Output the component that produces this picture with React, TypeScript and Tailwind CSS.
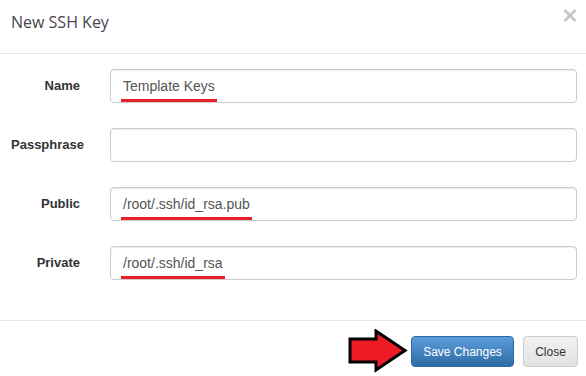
import React from "react";

function Field({ label, value, underline }: { label: string; value?: string; underline?: boolean }) {
  return (
    <div className="flex items-center">
      <div className="ml-[11px] w-[69px] shrink-0 text-right whitespace-nowrap text-[13px] font-bold text-[#333] font-['Liberation_Sans',Arial,sans-serif]">
        {label}
      </div>
      <div className="ml-[30px] mr-[9px] flex h-[34px] flex-1 items-center rounded-[4px] border border-[#ccc] bg-white pl-[12px] shadow-[inset_0_1px_1px_rgba(0,0,0,0.075)]">
        {value && (
          <span className="relative text-[14px] text-[#555] font-['Liberation_Sans',Arial,sans-serif]">
            {value}
            {underline && (
              <span className="absolute -left-[2px] -right-[2px] bottom-[-5px] h-[3px] bg-[#e8202a]" />
            )}
          </span>
        )}
      </div>
    </div>
  );
}

export default function App() {
  return (
    <div className="h-[376px] w-[586px] overflow-hidden bg-white">
      <div className="relative h-[54px] border-b border-[#e5e5e5]">
        <div className="pl-[11px] pt-[10px] text-[16px] leading-[24px] text-[#4a4450] font-['Open_Sans',sans-serif]">
          New SSH Key
        </div>
        <svg className="absolute left-[563px] top-[9px]" width="14" height="13" viewBox="0 0 14 13">
          <path d="M1.5 1 L12.5 12 M12.5 1 L1.5 12" stroke="#c6c6c6" strokeWidth="2.6" fill="none" />
        </svg>
      </div>
      <div className="flex flex-col gap-[25px] pt-[15px] pb-[40px]">
        <Field label="Name" value="Template Keys" underline />
        <Field label="Passphrase" />
        <Field label="Public" value="/root/.ssh/id_rsa.pub" underline />
        <Field label="Private" value="/root/.ssh/id_rsa" underline />
      </div>
      <div className="flex items-center justify-end border-t border-[#e5e5e5] pt-[8px] pr-[8px]">
        <svg width="60" height="45" viewBox="0 0 60 45" className="mr-[3px]">
          <polygon
            points="2,10 28,10 28,2 57,21.5 28,41 28,33 2,33"
            fill="#ed1c24"
            stroke="#000"
            strokeWidth="3"
            strokeLinejoin="miter"
          />
        </svg>
        <div className="flex h-[31px] w-[103px] items-center justify-center rounded-[4px] border border-[#2b67a2] bg-gradient-to-b from-[#5c9ddb] to-[#2e6ca7] text-[12px] text-white font-['Liberation_Sans',Arial,sans-serif]">
          Save Changes
        </div>
        <div className="ml-[9px] flex h-[31px] w-[55px] items-center justify-center rounded-[4px] border border-[#ccc] bg-gradient-to-b from-[#f2f2f2] to-[#e2e2e2] text-[12px] text-[#333] font-['Liberation_Sans',Arial,sans-serif]">
          Close
        </div>
      </div>
    </div>
  );
}
